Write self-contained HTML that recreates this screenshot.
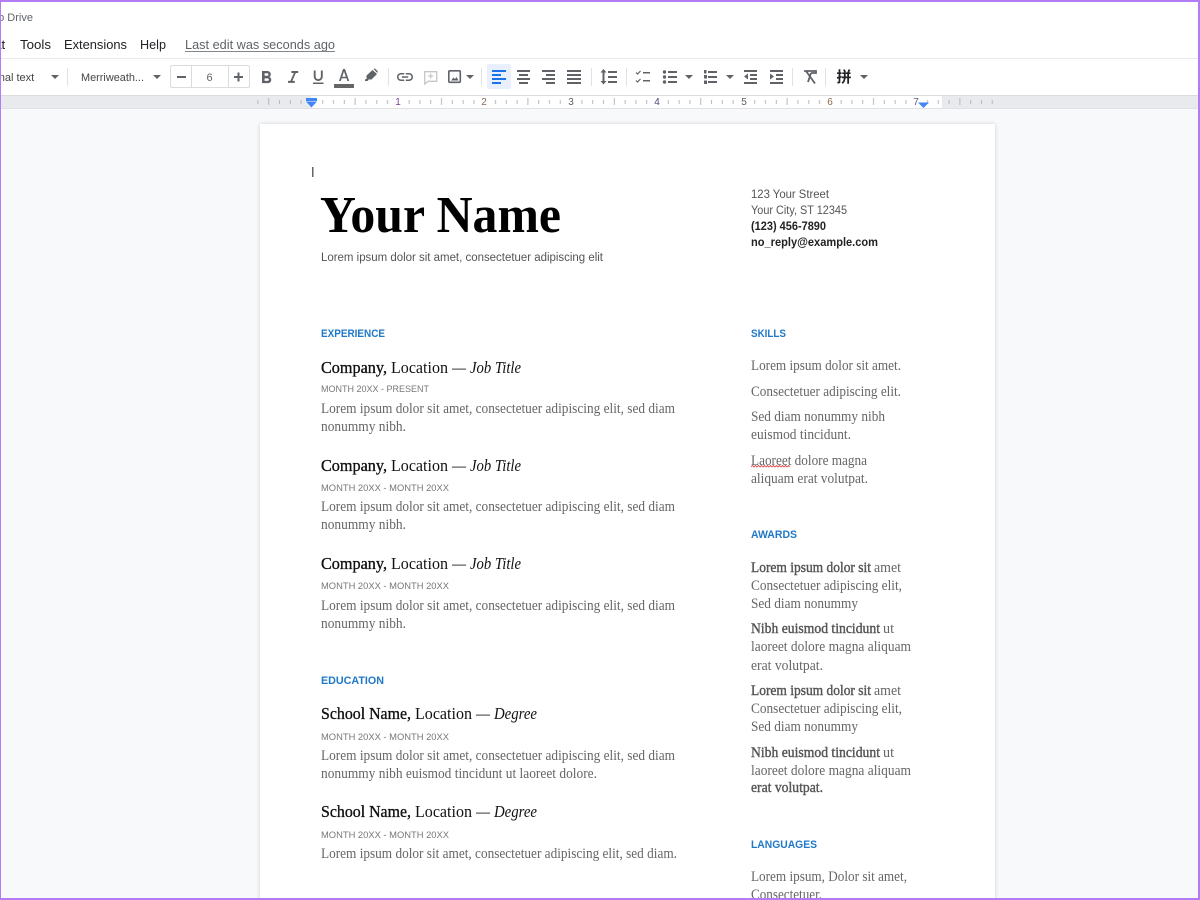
<!DOCTYPE html>
<html><head><meta charset="utf-8"><style>
html,body{margin:0;padding:0;width:1200px;height:900px;overflow:hidden;background:#f8f9fb}
#w{position:absolute;left:0;top:0;width:1200px;height:900px;overflow:hidden;background:#f8f9fb}
#pg{position:absolute;left:260px;top:124px;width:735px;height:776px;background:#fff;box-shadow:0 0 4px rgba(60,64,67,.22)}
#b{position:absolute;left:0;top:0;width:1197px;height:896px;border:solid #b27cf4;border-width:2px 2px 2px 1px;z-index:5}
svg{position:absolute;left:0;top:0}
text{white-space:pre}
.s{font-family:"Liberation Serif",serif;font-size:14.5px;fill:#666}
.sb{font-family:"Liberation Serif",serif;font-size:14.5px;fill:#555;stroke:#555;stroke-width:.4px}
.h{font-family:"Liberation Serif",serif;font-size:17px;fill:#111}
.hb{font-family:"Liberation Serif",serif;font-size:17px;fill:#111;stroke:#111;stroke-width:.35px}
.hi{font-family:"Liberation Serif",serif;font-size:17px;font-style:italic;fill:#111}
.m{font-family:"Liberation Sans",sans-serif;font-size:9px;fill:#777}
.k{font-family:"Liberation Sans",sans-serif;font-size:11px;font-weight:bold;fill:#1f78c8}
.o{font-family:"Liberation Sans",sans-serif;font-size:11.5px;fill:#555}
.ob{font-family:"Liberation Sans",sans-serif;font-size:11.5px;font-weight:bold;fill:#222}
.u{font-family:"Liberation Sans",sans-serif;font-size:13px;fill:#202124}
.t{font-family:"Liberation Sans",sans-serif;font-size:11px;fill:#444746}
.r{font-family:"Liberation Sans",sans-serif;font-size:10px;fill:#5f5a66;text-anchor:middle}
.i{fill:#5f6368}
</style></head><body>
<div id="w">
<div id="pg"></div>
<svg width="1200" height="900" viewBox="0 0 1200 900">
<defs>
<pattern id="tk" patternUnits="userSpaceOnUse" x="397.8" y="95" width="86.4" height="13">
<rect x="10.8" y="5" width="1" height="4" fill="#b4b8bd"/><rect x="21.6" y="5" width="1" height="4" fill="#b4b8bd"/><rect x="32.4" y="5" width="1" height="4" fill="#b4b8bd"/>
<rect x="43.2" y="3" width="1" height="7" fill="#b4b8bd"/>
<rect x="54" y="5" width="1" height="4" fill="#b4b8bd"/><rect x="64.8" y="5" width="1" height="4" fill="#b4b8bd"/><rect x="75.6" y="5" width="1" height="4" fill="#b4b8bd"/>
</pattern>
</defs>
<rect x="0" y="0" width="1200" height="95" fill="#fff"/>
<rect x="0" y="58" width="1200" height="1" fill="#e8eaed"/>
<text x="-5" y="21" class="t" textLength="38" lengthAdjust="spacingAndGlyphs" style="fill:#5f6368">to Drive</text>
<text x="-36" y="49" class="u">Format</text>
<text x="20" y="49" class="u" textLength="31" lengthAdjust="spacingAndGlyphs">Tools</text>
<text x="64" y="49" class="u" textLength="63" lengthAdjust="spacingAndGlyphs">Extensions</text>
<text x="140" y="49" class="u" textLength="26" lengthAdjust="spacingAndGlyphs">Help</text>
<text x="185" y="49" class="u" textLength="150" lengthAdjust="spacingAndGlyphs" style="fill:#5f6368">Last edit was seconds ago</text>
<rect x="185" y="51" width="150" height="1" fill="#80868b"/>
<text x="-22" y="81" class="t">Normal text</text>
<path d="M51 75h8l-4 4z" class="i"/>
<rect x="67" y="68" width="1" height="18" fill="#e0e2e5"/>
<text x="81" y="81" class="t" textLength="63" lengthAdjust="spacingAndGlyphs">Merriweath...</text>
<path d="M153 75h8l-4 4z" class="i"/>
<rect x="170.5" y="65.5" width="79" height="22" rx="1.5" fill="#fff" stroke="#dadce0"/>
<rect x="191" y="66" width="1" height="21" fill="#dadce0"/><rect x="228" y="66" width="1" height="21" fill="#dadce0"/>
<rect x="177" y="76" width="9" height="2" fill="#5f6368"/>
<rect x="234" y="76" width="9" height="2" fill="#5f6368"/><rect x="237.5" y="72.5" width="2" height="9" fill="#5f6368"/>
<text x="209.5" y="81" class="t" text-anchor="middle" style="fill:#5f6368">6</text>
<g class="i">
<path transform="translate(256,67.6) scale(.86)" d="M15.6 10.79c.97-.67 1.65-1.77 1.65-2.79 0-2.26-1.75-4-4-4H7v14h7.04c2.09 0 3.71-1.7 3.71-3.79 0-1.52-.86-2.82-2.15-3.42zM10 6.5h3c.83 0 1.5.67 1.5 1.5s-.67 1.5-1.5 1.5h-3v-3zm3.5 9H10v-3h3.5c.83 0 1.5.67 1.5 1.5s-.67 1.5-1.5 1.5z"/>
<path transform="translate(282.9,67.6) scale(.85)" d="M10 4v2.4h2.9l-4.1 9.200H6V18h8v-2.400h-2.900l4.100-9.200H18V4z"/>
<path transform="translate(309.25,68.3) scale(.75)" d="M12 17c3.31 0 6-2.69 6-6V3h-2.5v8c0 1.93-1.57 3.5-3.5 3.5S8.5 12.93 8.5 11V3H6v8c0 3.31 2.69 6 6 6zm-7 2v2h14v-2H5z"/>
<path d="M343 69h2l4.200 12h-1.800l-.9-2.800h-4.800l-.9 2.800h-1.800zM344 71.500l-1.800 5.200h3.600z"/>
<rect x="334" y="84" width="20" height="4" fill="#666"/>
<path d="M372.500 70l4.500 4-5.500 5.500h-3.500l-1.500-1.500v-2.500zM365 79.500l2-1 1.500 1.500-1 1h-2.500zM373.500 69l1.500-.5 2.800 2.800-.3 1.700z"/>
<path transform="translate(395.4,67.4) scale(.8)" d="M3.9 12c0-1.71 1.39-3.1 3.1-3.1h4V7H7c-2.76 0-5 2.24-5 5s2.24 5 5 5h4v-1.9H7c-1.71 0-3.1-1.39-3.1-3.1zM8 13h8v-2H8v2zm9-6h-4v1.9h4c1.71 0 3.1 1.39 3.1 3.1s-1.39 3.1-3.1 3.1h-4V17h4c2.76 0 5-2.24 5-5s-2.24-5-5-5z"/>
</g>
<rect x="388" y="68" width="1" height="18" fill="#e0e2e5"/>
<path d="M424.700 71.700h12v9.600h-8.500l-3.500 2.700z" fill="none" stroke="#c4c7c9" stroke-width="1.300"/>
<path d="M430.700 73.500v5M428.200 76h5" stroke="#c4c7c9" stroke-width="1.200"/>
<rect x="448.800" y="70.800" width="11.500" height="11.500" rx="1" fill="none" stroke="#5f6368" stroke-width="1.600"/>
<path d="M451 80.500l2.500-3 1.500 1.500 1.500-2 2 3.500z" class="i"/>
<path d="M466 75h8l-4 4z" class="i"/>
<rect x="481" y="68" width="1" height="18" fill="#e0e2e5"/>
<rect x="487" y="64" width="24" height="25" rx="2" fill="#e8f0fe"/>
<g fill="#1a73e8"><rect x="492" y="70" width="14" height="2"/><rect x="492" y="74" width="9" height="2"/><rect x="492" y="78" width="14" height="2"/><rect x="492" y="82" width="9" height="2"/></g>
<g class="i">
<rect x="517" y="70" width="13" height="2"/><rect x="519" y="74" width="9" height="2"/><rect x="517" y="78" width="13" height="2"/><rect x="519" y="82" width="9" height="2"/>
<rect x="542" y="70" width="13" height="2"/><rect x="546" y="74" width="9" height="2"/><rect x="542" y="78" width="13" height="2"/><rect x="546" y="82" width="9" height="2"/>
<rect x="567" y="70" width="14" height="2"/><rect x="567" y="74" width="14" height="2"/><rect x="567" y="78" width="14" height="2"/><rect x="567" y="82" width="14" height="2"/>
<rect x="608" y="71" width="9" height="2"/><rect x="608" y="76" width="9" height="2"/><rect x="608" y="81" width="9" height="2"/>
<path d="M603.500 69l3 3.500h-2V81h2l-3 3.500-3-3.500h2v-8.500h-2z"/>
<rect x="643" y="72" width="7" height="1.500"/><rect x="643" y="80" width="7" height="1.500"/>
<path d="M636 72.500l1.500 1.500 3-3M636 80.500l1.500 1.500 3-3" fill="none" stroke="#5f6368" stroke-width="1.200"/>
<circle cx="664.500" cy="72" r="1.700"/><circle cx="664.500" cy="77" r="1.700"/><circle cx="664.500" cy="82" r="1.700"/>
<rect x="668" y="71" width="9" height="2"/><rect x="668" y="76" width="9" height="2"/><rect x="668" y="81" width="9" height="2"/>
<path d="M685 75h8l-4 4z"/>
<rect x="708" y="71" width="9" height="2"/><rect x="708" y="76" width="9" height="2"/><rect x="708" y="81" width="9" height="2"/>
<rect x="704" y="70" width="2.500" height="3.500"/><rect x="704" y="75" width="3" height="3.500"/><rect x="704" y="80.500" width="3" height="3.500"/>
<path d="M726 75h8l-4 4z"/>
<rect x="744" y="70" width="13" height="2"/><rect x="750" y="74" width="7" height="2"/><rect x="750" y="78" width="7" height="2"/><rect x="744" y="82" width="13" height="2"/><path d="M748 73.500v6l-4-3z"/>
<rect x="770" y="70" width="13" height="2"/><rect x="776" y="74" width="7" height="2"/><rect x="776" y="78" width="7" height="2"/><rect x="770" y="82" width="13" height="2"/><path d="M770 73.500v6l4-3z"/>
</g>
<rect x="591" y="68" width="1" height="18" fill="#e0e2e5"/>
<rect x="626" y="68" width="1" height="18" fill="#e0e2e5"/>
<rect x="792" y="68" width="1" height="18" fill="#e0e2e5"/>
<rect x="825" y="68" width="1" height="18" fill="#e0e2e5"/>
<path d="M804 71h12v2h-5M806 71l9 12.500" fill="none" stroke="#5f6368" stroke-width="1.800"/>
<path d="M811 73l-3 9" fill="none" stroke="#5f6368" stroke-width="1.800"/>
<text x="844" y="82" text-anchor="middle" style="font-family:'Noto Sans CJK SC',sans-serif;font-size:15px;font-weight:bold;fill:#202124">拼</text>
<path d="M860 75h8l-4 4z" class="i"/>
<rect x="0" y="95" width="1200" height="14" fill="#e8eaed"/>
<rect x="311" y="96" width="631" height="12" fill="#fff"/>
<rect x="0" y="95" width="1200" height="1" fill="#dadce0"/>
<rect x="0" y="108" width="1200" height="1" fill="#dfe1e5"/>
<rect x="257" y="96" width="738" height="12" fill="url(#tk)"/>
<g><text x="398" y="105" class="r" style="fill:#7a3f95">1</text><text x="484" y="105" class="r" style="fill:#8a6a5a">2</text><text x="571" y="105" class="r">3</text><text x="657" y="105" class="r" style="fill:#4a4a78">4</text><text x="744" y="105" class="r">5</text><text x="830" y="105" class="r" style="fill:#8a6a4a">6</text><text x="916" y="105" class="r" style="fill:#5a6080">7</text></g>
<rect x="306" y="98" width="11" height="3" fill="#4285f4"/>
<path d="M306 101.500h11l-5.500 6z" fill="#4285f4"/>
<path d="M918 102.500h11l-5.500 5.500z" fill="#4285f4"/>
<rect x="312" y="167" width="1.500" height="10" fill="#666"/>
<text x="320" y="232" textLength="241" lengthAdjust="spacingAndGlyphs" style="font-family:'Liberation Serif',serif;font-weight:bold;font-size:52px;fill:#000">Your Name</text>
<text x="321" y="261" class="o" textLength="282" lengthAdjust="spacingAndGlyphs">Lorem ipsum dolor sit amet, consectetuer adipiscing elit</text>
<text x="751" y="198" class="o" textLength="78" lengthAdjust="spacingAndGlyphs">123 Your Street</text>
<text x="751" y="214" class="o" textLength="96" lengthAdjust="spacingAndGlyphs">Your City, ST 12345</text>
<text x="751" y="230" class="ob" textLength="75" lengthAdjust="spacingAndGlyphs">(123) 456-7890</text>
<text x="751" y="246" class="ob" textLength="127" lengthAdjust="spacingAndGlyphs">no_reply@example.com</text>

<text x="321" y="337" class="k" textLength="64" lengthAdjust="spacingAndGlyphs">EXPERIENCE</text>
<text x="321" y="373" class="hb" textLength="66" lengthAdjust="spacingAndGlyphs">Company,</text><text x="391" y="373" class="h" textLength="57" lengthAdjust="spacingAndGlyphs">Location</text><text x="452" y="373" class="h" textLength="14" lengthAdjust="spacingAndGlyphs">—</text><text x="470" y="373" class="hi" textLength="51" lengthAdjust="spacingAndGlyphs">Job Title</text>
<text x="321" y="392" class="m" textLength="108" lengthAdjust="spacingAndGlyphs">MONTH 20XX - PRESENT</text>
<text x="321" y="413" class="s" textLength="354" lengthAdjust="spacingAndGlyphs">Lorem ipsum dolor sit amet, consectetuer adipiscing elit, sed diam</text>
<text x="321" y="431" class="s" textLength="85" lengthAdjust="spacingAndGlyphs">nonummy nibh.</text>

<text x="321" y="471" class="hb" textLength="66" lengthAdjust="spacingAndGlyphs">Company,</text><text x="391" y="471" class="h" textLength="57" lengthAdjust="spacingAndGlyphs">Location</text><text x="452" y="471" class="h" textLength="14" lengthAdjust="spacingAndGlyphs">—</text><text x="470" y="471" class="hi" textLength="51" lengthAdjust="spacingAndGlyphs">Job Title</text>
<text x="321" y="491" class="m" textLength="128" lengthAdjust="spacingAndGlyphs">MONTH 20XX - MONTH 20XX</text>
<text x="321" y="511" class="s" textLength="354" lengthAdjust="spacingAndGlyphs">Lorem ipsum dolor sit amet, consectetuer adipiscing elit, sed diam</text>
<text x="321" y="529" class="s" textLength="85" lengthAdjust="spacingAndGlyphs">nonummy nibh.</text>

<text x="321" y="569" class="hb" textLength="66" lengthAdjust="spacingAndGlyphs">Company,</text><text x="391" y="569" class="h" textLength="57" lengthAdjust="spacingAndGlyphs">Location</text><text x="452" y="569" class="h" textLength="14" lengthAdjust="spacingAndGlyphs">—</text><text x="470" y="569" class="hi" textLength="51" lengthAdjust="spacingAndGlyphs">Job Title</text>
<text x="321" y="589" class="m" textLength="128" lengthAdjust="spacingAndGlyphs">MONTH 20XX - MONTH 20XX</text>
<text x="321" y="610" class="s" textLength="354" lengthAdjust="spacingAndGlyphs">Lorem ipsum dolor sit amet, consectetuer adipiscing elit, sed diam</text>
<text x="321" y="628" class="s" textLength="85" lengthAdjust="spacingAndGlyphs">nonummy nibh.</text>

<text x="321" y="684" class="k" textLength="63" lengthAdjust="spacingAndGlyphs">EDUCATION</text>
<text x="321" y="719" class="hb" textLength="90" lengthAdjust="spacingAndGlyphs">School Name,</text><text x="415" y="719" class="h" textLength="57" lengthAdjust="spacingAndGlyphs">Location</text><text x="476" y="719" class="h" textLength="14" lengthAdjust="spacingAndGlyphs">—</text><text x="494" y="719" class="hi" textLength="43" lengthAdjust="spacingAndGlyphs">Degree</text>
<text x="321" y="740" class="m" textLength="128" lengthAdjust="spacingAndGlyphs">MONTH 20XX - MONTH 20XX</text>
<text x="321" y="760" class="s" textLength="354" lengthAdjust="spacingAndGlyphs">Lorem ipsum dolor sit amet, consectetuer adipiscing elit, sed diam</text>
<text x="321" y="778" class="s" textLength="276" lengthAdjust="spacingAndGlyphs">nonummy nibh euismod tincidunt ut laoreet dolore.</text>
<text x="321" y="817" class="hb" textLength="90" lengthAdjust="spacingAndGlyphs">School Name,</text><text x="415" y="817" class="h" textLength="57" lengthAdjust="spacingAndGlyphs">Location</text><text x="476" y="817" class="h" textLength="14" lengthAdjust="spacingAndGlyphs">—</text><text x="494" y="817" class="hi" textLength="43" lengthAdjust="spacingAndGlyphs">Degree</text>
<text x="321" y="838" class="m" textLength="128" lengthAdjust="spacingAndGlyphs">MONTH 20XX - MONTH 20XX</text>
<text x="321" y="858" class="s" textLength="356" lengthAdjust="spacingAndGlyphs">Lorem ipsum dolor sit amet, consectetuer adipiscing elit, sed diam.</text>

<text x="751" y="337" class="k" textLength="35" lengthAdjust="spacingAndGlyphs">SKILLS</text>
<text x="751" y="370" class="s" textLength="150" lengthAdjust="spacingAndGlyphs">Lorem ipsum dolor sit amet.</text>
<text x="751" y="396" class="s" textLength="150" lengthAdjust="spacingAndGlyphs">Consectetuer adipiscing elit.</text>
<text x="751" y="421" class="s" textLength="134" lengthAdjust="spacingAndGlyphs">Sed diam nonummy nibh</text>
<text x="751" y="439" class="s" textLength="100" lengthAdjust="spacingAndGlyphs">euismod tincidunt.</text>
<text x="751" y="465" class="s" textLength="116" lengthAdjust="spacingAndGlyphs">Laoreet dolore magna</text>
<path d="M751 467l1.500-1.500 1.500 1.500 1.500-1.500 1.500 1.500 1.500-1.500 1.500 1.500 1.500-1.500 1.500 1.500 1.500-1.500 1.500 1.500 1.500-1.500 1.500 1.500 1.500-1.500 1.500 1.500 1.500-1.500 1.500 1.500 1.500-1.500 1.500 1.500 1.500-1.500 1.500 1.500 1.500-1.500 1.500 1.500 1.500-1.500 1.500 1.500 1.500-1.500 1.500 1.500" fill="none" stroke="#e04040" stroke-width=".8"/>
<text x="751" y="483" class="s" textLength="117" lengthAdjust="spacingAndGlyphs">aliquam erat volutpat.</text>

<text x="751" y="538" class="k" textLength="46" lengthAdjust="spacingAndGlyphs">AWARDS</text>
<text x="751" y="572" class="sb" textLength="120" lengthAdjust="spacingAndGlyphs">Lorem ipsum dolor sit</text><text x="874" y="572" class="s" textLength="27" lengthAdjust="spacingAndGlyphs">amet</text>
<text x="751" y="590" class="s" textLength="151" lengthAdjust="spacingAndGlyphs">Consectetuer adipiscing elit,</text>
<text x="751" y="608" class="s" textLength="107" lengthAdjust="spacingAndGlyphs">Sed diam nonummy</text>
<text x="751" y="633" class="sb" textLength="129" lengthAdjust="spacingAndGlyphs">Nibh euismod tincidunt</text><text x="883" y="633" class="s" textLength="11" lengthAdjust="spacingAndGlyphs">ut</text>
<text x="751" y="651" class="s" textLength="160" lengthAdjust="spacingAndGlyphs">laoreet dolore magna aliquam</text>
<text x="751" y="670" class="s" textLength="72" lengthAdjust="spacingAndGlyphs">erat volutpat.</text>
<text x="751" y="695" class="sb" textLength="120" lengthAdjust="spacingAndGlyphs">Lorem ipsum dolor sit</text><text x="874" y="695" class="s" textLength="27" lengthAdjust="spacingAndGlyphs">amet</text>
<text x="751" y="713" class="s" textLength="151" lengthAdjust="spacingAndGlyphs">Consectetuer adipiscing elit,</text>
<text x="751" y="731" class="s" textLength="107" lengthAdjust="spacingAndGlyphs">Sed diam nonummy</text>
<text x="751" y="757" class="sb" textLength="129" lengthAdjust="spacingAndGlyphs">Nibh euismod tincidunt</text><text x="883" y="757" class="s" textLength="11" lengthAdjust="spacingAndGlyphs">ut</text>
<text x="751" y="775" class="s" textLength="160" lengthAdjust="spacingAndGlyphs">laoreet dolore magna aliquam</text>
<text x="751" y="792" class="sb" textLength="72" lengthAdjust="spacingAndGlyphs">erat volutpat.</text>

<text x="751" y="848" class="k" textLength="66" lengthAdjust="spacingAndGlyphs">LANGUAGES</text>
<text x="751" y="881" class="s" textLength="156" lengthAdjust="spacingAndGlyphs">Lorem ipsum, Dolor sit amet,</text>
<text x="751" y="899" class="s" textLength="71" lengthAdjust="spacingAndGlyphs">Consectetuer.</text>
</svg>
<div id="b"></div>
</div>
</body></html>
